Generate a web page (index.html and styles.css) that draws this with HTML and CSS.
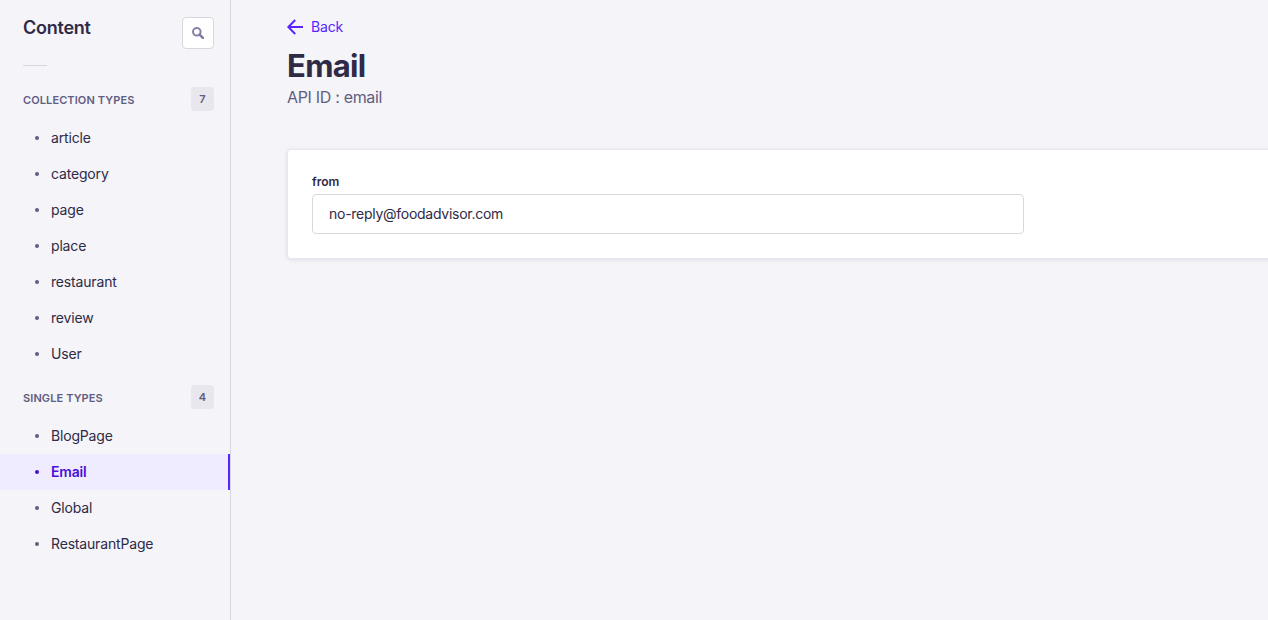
FILE: index.html
```html
<!DOCTYPE html>
<html lang="en">
<head>
<meta charset="utf-8">
<title>Content - Email</title>
<link rel="stylesheet" href="styles.css">
</head>
<body>
<div class="app">
  <nav class="sidebar">
    <header class="sidebar-header">
      <h2 class="sidebar-title">Content</h2>
      <button class="search" aria-label="Search"><svg width="12" height="12" viewBox="0 0 12 12" fill="none" stroke="#8380a4"><circle cx="4.8" cy="4.8" r="3.8" stroke-width="2"/><path d="M7.6 7.6l3.4 3.4" stroke-width="2.5" stroke-linecap="round"/></svg></button>
    </header>
    <div class="divider"></div>
    <section class="group">
      <div class="group-head"><span class="group-name">COLLECTION TYPES</span><span class="count">7</span></div>
      <ul class="links">
        <li class="link"><span>article</span></li>
        <li class="link"><span>category</span></li>
        <li class="link"><span>page</span></li>
        <li class="link"><span>place</span></li>
        <li class="link"><span>restaurant</span></li>
        <li class="link"><span>review</span></li>
        <li class="link"><span>User</span></li>
      </ul>
    </section>
    <section class="group">
      <div class="group-head"><span class="group-name">SINGLE TYPES</span><span class="count">4</span></div>
      <ul class="links">
        <li class="link"><span>BlogPage</span></li>
        <li class="link active"><span>Email</span></li>
        <li class="link"><span>Global</span></li>
        <li class="link"><span>RestaurantPage</span></li>
      </ul>
    </section>
  </nav>
  <main class="main">
    <a class="back"><svg width="16" height="16" viewBox="0 0 16 16" fill="none" stroke="#5925ff" stroke-width="2"><path d="M16 8H1.5M8.2 1L1.3 8l6.9 7"/></svg><span>Back</span></a>
    <h1 class="title">Email</h1>
    <p class="subtitle">API ID : email</p>
    <div class="card">
      <label class="label" for="from">from</label>
      <input class="input" id="from" type="text" value="no-reply@foodadvisor.com">
    </div>
  </main>
</div>
</body>
</html>
```
FILE: styles.css
```css
* { box-sizing: border-box; }
body { margin: 0; font-family: Inter, sans-serif; background: #f4f4f9; color: #2f2a45; }
h1, h2, p, ul { margin: 0; padding: 0; }
.app { display: flex; height: 620px; overflow: hidden; }
.sidebar { width: 231px; flex: none; border-right: 1px solid #d8d7e0; padding-top: 17px; }
.sidebar-header { display: flex; justify-content: space-between; padding: 0 16px 0 23px; height: 32px; }
.sidebar-title { font-size: 18px; line-height: 22px; font-weight: 600; letter-spacing: -0.25px; }
.search { width: 32px; height: 32px; padding: 0; border: 1px solid #d8d7e0; border-radius: 4px; background: #fff; display: flex; align-items: center; justify-content: center; }
.divider { width: 24px; height: 1px; background: #d8d7e0; margin: 16px 0 21px 23px; }
.group { margin-bottom: 13px; }
.group-head { display: flex; height: 24px; align-items: center; justify-content: space-between; padding: 0 16px 0 23px; margin-bottom: 9px; }
.group-name { font-size: 11px; font-weight: 600; color: #625d80; line-height: 16px; padding-top: 2px; letter-spacing: 0.1px; }
.count { width: 23px; height: 24px; border-radius: 4px; background: #e8e7ed; color: #625d80; font-size: 11px; line-height: 24px; font-weight: 600; text-align: center; }
.links { list-style: none; }
.link { height: 36px; display: flex; align-items: center; padding-left: 35px; font-size: 14px; line-height: 20px; letter-spacing: -0.17px; }
.link::before { content: ""; width: 4px; height: 4px; border-radius: 50%; background: #625d80; margin-right: 12px; }
.active { background: #f0ecff; color: #4a0fd8; font-weight: 600; border-right: 2px solid #5925ff; }
.active::before { background: #4a0fd8; }
.main { flex: 1; min-width: 0; padding: 17px 0 0 56px; }
.back { display: flex; align-items: center; gap: 8px; height: 20px; font-size: 14px; line-height: 18px; letter-spacing: -0.15px; color: #5925ff; }
.title { font-size: 31px; line-height: 40px; font-weight: 700; letter-spacing: -0.7px; margin-top: 9px; }
.subtitle { font-size: 16px; line-height: 24px; letter-spacing: -0.32px; color: #625d80; margin-top: -1px; }
.card { width: 1050px; height: 110px; margin-top: 40px; padding: 24px; background: #fff; border-radius: 4px; border: 1px solid #e8e7ef; box-shadow: 0 1px 4px rgba(33,33,52,.1); }
.label { display: block; font-size: 12px; line-height: 16px; font-weight: 600; margin-bottom: 4px; }
.input { display: block; width: 712px; height: 40px; border: 1px solid #d8d7e0; border-radius: 4px; background: #fff; padding: 0 16px 2px; font: 14px Inter, sans-serif; letter-spacing: -0.27px; color: #2f2a45; }
```
